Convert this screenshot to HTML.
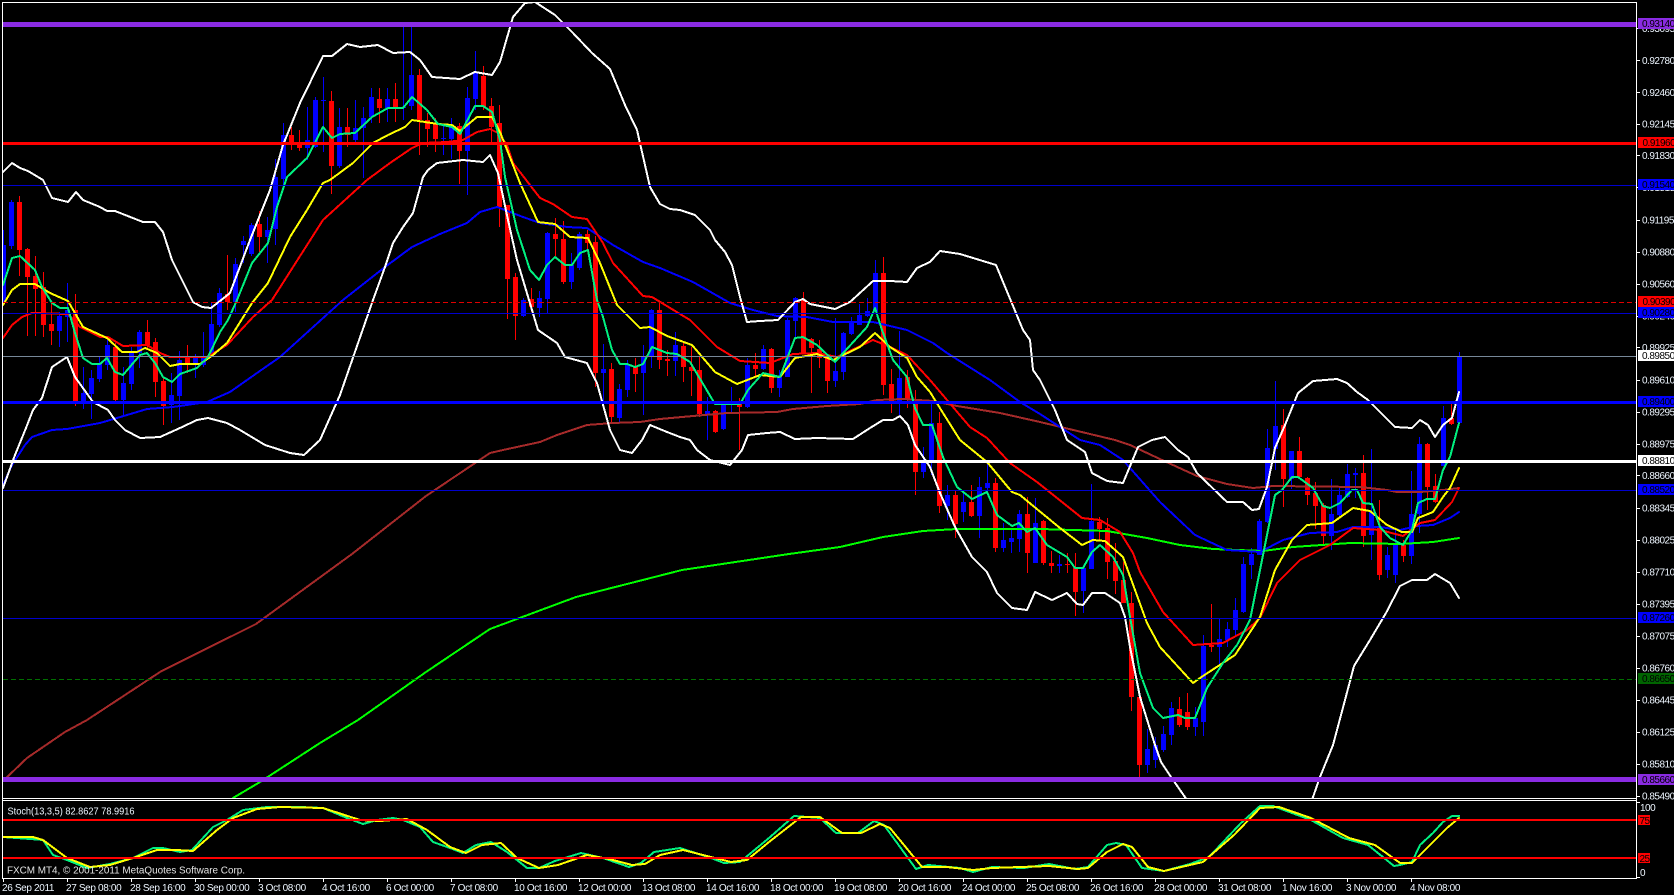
<!DOCTYPE html>
<html><head><meta charset="utf-8"><title>FXCM MT4 chart</title>
<style>
html,body{margin:0;padding:0;background:#000;width:1674px;height:895px;overflow:hidden}
svg{display:block}
text{font-family:"Liberation Sans",sans-serif;font-size:10px;fill:#eef6ff}
.p{letter-spacing:-.5px}
.d{letter-spacing:-.35px}
.k{fill:#000}
.m{fill:none;stroke-width:2;stroke-linejoin:round;stroke-linecap:round;shape-rendering:crispEdges}
.c path{shape-rendering:crispEdges;fill:none}
.h{shape-rendering:crispEdges}
</style></head><body>
<svg width="1674" height="895" viewBox="0 0 1674 895" xmlns="http://www.w3.org/2000/svg">
<defs><clipPath id="mc"><rect x="3" y="3" width="1633" height="795"/></clipPath></defs>
<rect width="1674" height="895" fill="#000"/>
<g clip-path="url(#mc)">
<g class="c">
<path stroke="#0000ff" stroke-width="1" d="M3.5 230V303M11.5 200V249M59.5 312V347M67.5 283V342M83.5 367V409M91.5 370V419M99.5 356V382M107.5 340V370M123.5 367V417M131.5 347V390M139.5 330V368M171.5 373V423M179.5 351V420M195.5 354V378M203.5 332V367M211.5 302V357M219.5 288V327M235.5 258V312M243.5 236V263M251.5 223V256M267.5 217V263M275.5 159V245M283.5 123V187M307.5 107V160M315.5 97V148M323.5 77V152M339.5 108V168M355.5 100V145M363.5 107V178M371.5 88V123M387.5 88V122M403.5 27V120M411.5 27V110M443.5 125V155M451.5 118V159M467.5 87V195M475.5 51V110M523.5 298V317M539.5 291V317M547.5 232V313M571.5 253V289M579.5 232V270M603.5 344V402M619.5 384V422M627.5 360V397M643.5 345V415M651.5 309V368M675.5 332V376M707.5 397V440M723.5 404V430M731.5 387V413M747.5 358V408M763.5 345V370M779.5 370V397M787.5 318V377M795.5 297V337M835.5 318V387M843.5 332V380M851.5 317V335M859.5 304V325M867.5 298V317M875.5 260V312M899.5 331V415M923.5 447V478M931.5 403V475M947.5 485V520M963.5 492V522M979.5 477V538M987.5 463V493M1003.5 523V552M1011.5 530V553M1019.5 510V552M1035.5 498V563M1059.5 555V573M1083.5 567V613M1091.5 484V569M1147.5 729V773M1155.5 737V768M1163.5 726V752M1171.5 702V745M1195.5 707V736M1203.5 635V736M1219.5 619V664M1227.5 622V647M1235.5 598V637M1243.5 557V613M1251.5 548V579M1259.5 519V555M1267.5 429V523M1275.5 381V470M1291.5 451V489M1331.5 479V550M1339.5 487V517M1347.5 464V498M1355.5 468V498M1371.5 449V560M1387.5 547V578M1395.5 530V583M1411.5 471V564M1419.5 437V533M1443.5 406V466M1459.5 352V423"/>
<path stroke="#ff0000" stroke-width="1" d="M19.5 196V276M27.5 248V336M35.5 256V336M43.5 272V337M51.5 303V345M75.5 294V406M115.5 343V402M147.5 320V350M155.5 338V397M163.5 377V425M187.5 345V373M227.5 255V310M259.5 211V252M291.5 127V150M299.5 130V151M331.5 91V194M347.5 108V147M379.5 88V123M395.5 83V122M419.5 69V155M427.5 113V147M435.5 118V152M459.5 123V184M483.5 66V110M491.5 98V143M499.5 105V227M507.5 205V319M515.5 273V340M531.5 288V312M555.5 218V256M563.5 221V284M587.5 230V252M595.5 236V387M611.5 363V423M635.5 358V392M659.5 303V369M667.5 350V376M683.5 343V382M691.5 347V396M699.5 357V417M715.5 410V433M739.5 398V450M755.5 353V377M771.5 348V393M803.5 292V354M811.5 338V393M819.5 340V368M827.5 357V393M883.5 257V395M891.5 369V413M907.5 370V408M915.5 390V495M939.5 412V513M955.5 490V538M971.5 485V517M995.5 478V552M1027.5 497V573M1043.5 520V565M1051.5 551V573M1067.5 553V573M1075.5 553V616M1099.5 517V540M1107.5 518V579M1115.5 543V594M1123.5 562V603M1131.5 592V711M1139.5 697V777M1179.5 697V727M1187.5 693V730M1211.5 604V652M1283.5 409V507M1299.5 437V479M1307.5 477V505M1315.5 482V529M1323.5 503V545M1363.5 455V547M1379.5 500V580M1403.5 540V562M1427.5 443V510M1435.5 474V503M1451.5 403V425"/>
<path stroke="#0000ff" stroke-width="5" d="M3.5 245V303M11.5 202V246M59.5 316V331M67.5 310V317M83.5 393V401M91.5 378V394M99.5 363V379M107.5 345V365M123.5 383V400M131.5 353V384M139.5 332V353M171.5 395V405M179.5 360V396M195.5 358V364M203.5 357V365M211.5 324V356M219.5 293V325M235.5 264V302M243.5 241V245M251.5 225V254M267.5 230V237M275.5 177V229M283.5 135V179M307.5 140V148M315.5 100V147M323.5 100V101M339.5 127V166M355.5 128V140M363.5 118V128M371.5 97V117M387.5 99V108M403.5 107V108M411.5 75V106M443.5 138V139M451.5 127V139M467.5 98V151M475.5 73V99M523.5 300V316M539.5 298V308M547.5 233V299M571.5 265V282M579.5 234V268M603.5 369V373M619.5 389V418M627.5 365V390M643.5 357V373M651.5 310V357M675.5 345V361M707.5 411V414M723.5 404V429M731.5 403V404M747.5 365V407M763.5 349V369M779.5 377V388M787.5 320V377M795.5 298V321M835.5 371V381M843.5 333V372M851.5 323V334M859.5 315V325M867.5 311V316M875.5 273V312M899.5 378V401M923.5 463V472M931.5 423V463M947.5 495V506M963.5 502V512M979.5 487V516M987.5 483V488M1003.5 540V548M1011.5 538V542M1019.5 514V539M1035.5 523V563M1059.5 564V566M1083.5 568V591M1091.5 521V569M1147.5 749V765M1155.5 745V760M1163.5 734V750M1171.5 708V735M1195.5 718V727M1203.5 646V722M1219.5 639V647M1227.5 629V640M1235.5 610V630M1243.5 564V612M1251.5 554V565M1259.5 521V555M1267.5 448V522M1275.5 426V449M1291.5 451V479M1331.5 514V536M1339.5 495V515M1347.5 474V497M1355.5 473V475M1371.5 512V535M1387.5 555V570M1395.5 545V575M1411.5 514V556M1419.5 444V514M1443.5 418V466M1459.5 356V423"/>
<path stroke="#ff0000" stroke-width="5" d="M19.5 202V250M27.5 249V277M35.5 276V289M43.5 287V325M51.5 324V331M75.5 310V401M115.5 347V400M147.5 332V345M155.5 342V382M163.5 381V406M187.5 357V364M227.5 294V302M259.5 224V237M291.5 135V144M299.5 143V148M331.5 101V166M347.5 127V135M379.5 99V108M395.5 99V108M419.5 75V120M427.5 120V129M435.5 124V139M459.5 126V151M483.5 76V107M491.5 106V127M499.5 123V207M507.5 205V279M515.5 277V316M531.5 299V307M555.5 234V239M563.5 239V282M587.5 234V243M595.5 242V373M611.5 369V417M635.5 367V374M659.5 310V360M667.5 359V361M683.5 346V367M691.5 367V371M699.5 370V414M715.5 411V432M739.5 404V407M755.5 365V369M771.5 349V388M803.5 300V353M811.5 339V348M819.5 349V358M827.5 358V381M883.5 273V385M891.5 384V401M907.5 377V400M915.5 403V472M939.5 423V506M955.5 495V524M971.5 502V516M995.5 483V548M1027.5 514V553M1043.5 521V563M1051.5 563V566M1067.5 564V565M1075.5 568V592M1099.5 522V529M1107.5 528V562M1115.5 561V581M1123.5 580V603M1131.5 603V697M1139.5 697V765M1179.5 709V725M1187.5 712V727M1211.5 645V647M1283.5 425V479M1299.5 451V477M1307.5 478V495M1315.5 493V506M1323.5 505V536M1363.5 473V536M1379.5 528V575M1403.5 545V556M1427.5 444V487M1435.5 486V502M1451.5 418V424"/>
</g>
<!-- brown MA -->
<polyline class="m" stroke="#a52a2a" points="3,781 27,758 65,732 87,720 160,672 256,624 352,554 426,496 490,453 503,450 540,442 557,435 587,425 613,423 640,422 660,419 693,416 727,413 777,412 793,409 827,406 860,404 877,400 903,399 933,401 957,406 1000,413 1040,422 1115,440 1130,445 1162,460 1197,476 1227,484 1253,488 1273,486 1360,487 1387,490 1397,492 1420,492 1443,490 1459,488"/>
<!-- lime MA -->
<polyline class="m" stroke="#00ff00" points="233,798 260,782 320,743 358,720 426,672 490,629 576,597 682,570 789,554 840,547 883,537 923,531 957,529 1040,529 1107,531 1147,538 1180,545 1213,549 1263,551 1293,547 1350,543 1400,544 1433,542 1459,538"/>
<!-- blue MA -->
<polyline class="m" stroke="#0000ff" points="3,485 12,465 25,445 32,437 52,430 67,429 100,423 117,418 147,409 173,407 207,402 230,392 257,373 280,357 343,300 385,267 412,247 440,234 467,223 480,212 497,207 523,217 540,223 567,227 587,228 613,245 643,262 660,268 693,282 730,303 753,310 777,316 807,317 833,322 873,322 907,330 933,343 947,353 990,380 1020,402 1040,414 1080,440 1100,445 1123,460 1160,502 1195,535 1227,550 1260,552 1283,540 1310,533 1337,532 1353,527 1380,527 1400,530 1417,526 1433,525 1450,518 1459,512"/>
<!-- white upper band -->
<polyline class="m" stroke="#ffffff" points="3,172 12,163 20,168 28,171 43,180 52,198 68,202 76,192 83,200 100,207 107,211 115,211 143,222 155,222 163,232 172,260 193,302 202,307 211,308 220,301 230,293 250,240 270,190 283,145 300,103 323,56 332,56 347,44 360,47 378,45 393,53 410,52 420,60 432,77 460,79 475,72 492,75 500,62 513,17 525,3 535,2 555,15 572,32 592,53 610,69 625,105 637,130 650,187 660,204 670,209 680,210 695,215 710,230 715,240 725,252 732,265 740,297 747,322 760,321 778,320 795,302 803,299 810,304 835,309 850,302 873,281 890,281 907,282 917,268 930,262 940,251 960,254 996,265 1023,330 1030,340 1033,370 1040,380 1055,410 1067,440 1085,452 1092,473 1107,481 1123,483 1138,447 1152,440 1165,437 1178,450 1188,457 1197,473 1227,502 1243,502 1252,510 1259,509 1267,487 1275,448 1285,425 1298,393 1313,381 1337,379 1347,383 1357,392 1368,400 1395,427 1412,428 1420,420 1428,425 1435,437 1443,425 1452,418 1459,392"/>
<!-- white lower band -->
<polyline class="m" stroke="#ffffff" points="3,488 15,455 26,428 33,410 42,398 52,367 67,357 75,377 93,402 108,410 115,420 125,430 140,438 160,437 180,428 197,420 208,418 227,423 240,430 265,445 290,453 304,455 320,440 340,395 373,300 385,267 393,243 403,227 413,213 423,177 428,170 437,163 463,160 483,162 490,155 498,173 508,220 517,260 538,330 557,343 565,357 587,363 597,383 610,430 620,450 632,453 642,440 650,425 667,432 680,437 690,440 697,450 710,460 730,465 742,450 748,435 767,433 780,432 795,439 817,438 853,439 870,428 883,420 893,420 900,416 908,425 915,445 930,467 940,493 955,527 972,557 987,572 997,593 1012,608 1027,610 1035,592 1052,600 1067,593 1077,604 1083,605 1092,593 1105,593 1120,603 1125,617 1130,647 1140,697 1155,745 1161,762 1171,777 1187,800"/>
<polyline class="m" stroke="#ffffff" points="1312,800 1320,777 1333,745 1345,700 1354,666 1370,640 1386,613 1400,586 1412,580 1427,580 1435,574 1450,583 1459,598"/>
<!-- red MA -->
<polyline class="m" stroke="#ff0000" points="3,338 12,325 22,317 32,313 68,314 80,327 100,337 108,337 123,346 147,345 160,353 170,357 207,357 227,345 253,317 272,300 323,220 367,180 390,163 412,148 423,143 447,142 463,140 477,132 490,129 498,133 507,145 513,163 540,198 553,204 572,217 587,219 603,243 613,263 643,296 652,297 680,314 690,320 717,347 740,361 770,363 793,354 817,353 837,357 873,340 890,347 907,355 930,380 947,400 970,427 987,438 1010,463 1027,475 1037,482 1082,518 1100,520 1120,532 1133,553 1140,572 1163,612 1193,645 1223,643 1247,630 1260,618 1277,583 1300,560 1330,545 1353,528 1380,530 1403,536 1420,523 1435,520 1452,502 1459,488"/>
<!-- yellow MA -->
<polyline class="m" stroke="#ffff00" points="3,305 12,290 20,284 35,284 50,293 68,301 83,327 107,338 122,352 137,352 145,348 157,353 170,366 180,364 200,364 213,355 227,343 252,303 268,283 290,237 307,210 323,183 330,180 353,163 373,143 388,135 405,127 412,120 438,124 452,125 460,131 477,117 492,117 500,132 513,165 520,183 538,222 555,224 570,237 588,238 600,263 617,305 640,328 650,327 667,336 692,345 715,372 737,384 760,375 780,377 795,358 817,354 833,360 860,347 875,333 890,347 907,358 917,377 930,392 943,413 960,440 987,462 1012,492 1020,495 1032,505 1060,528 1082,545 1093,540 1105,541 1123,557 1147,623 1160,647 1193,683 1203,676 1235,655 1260,617 1275,570 1292,540 1307,525 1332,523 1353,508 1370,511 1387,525 1402,532 1412,532 1418,518 1433,512 1443,497 1450,488 1459,468"/>
<!-- spring green MA -->
<polyline class="m" stroke="#00f080" points="3,285 12,258 20,256 35,270 42,287 52,303 60,308 68,308 75,333 83,358 92,364 100,364 107,358 115,372 123,375 140,355 147,353 155,363 163,377 172,382 180,374 197,368 208,357 220,332 228,320 237,300 252,263 268,243 277,207 287,177 307,158 323,127 332,138 340,134 355,133 372,117 388,108 403,108 412,97 427,110 438,124 452,127 460,134 475,106 483,106 492,112 500,140 505,177 517,230 530,270 539,280 547,265 555,257 565,265 572,265 580,253 588,250 597,300 603,317 612,350 620,364 627,364 635,367 643,364 652,347 667,353 677,354 690,362 715,404 740,404 748,390 763,373 780,377 795,338 803,337 817,345 835,362 867,327 875,308 882,330 893,360 907,377 915,408 923,425 932,425 943,457 957,487 972,499 987,492 997,515 1012,526 1019,523 1027,532 1035,528 1047,545 1067,557 1075,568 1083,568 1092,552 1100,545 1113,557 1123,575 1130,617 1140,673 1153,708 1163,718 1178,715 1185,718 1195,718 1207,688 1223,663 1237,645 1250,620 1262,560 1275,495 1282,490 1292,477 1298,477 1313,488 1323,506 1330,508 1340,503 1352,490 1357,490 1363,503 1372,504 1380,527 1390,538 1403,545 1412,530 1418,503 1427,499 1435,499 1443,470 1450,457 1459,423"/>
</g>
<!-- horizontal lines -->
<g class="h">
<rect x="3" y="22" width="1633" height="5" fill="#8a2be2"/>
<rect x="3" y="142" width="1633" height="3" fill="#ff0000"/>
<rect x="3" y="185" width="1633" height="1" fill="#0000cd"/>
<line x1="3" x2="1636" y1="302.5" y2="302.5" stroke="#e00000" stroke-dasharray="5 3"/>
<rect x="3" y="313" width="1633" height="1" fill="#0000cd"/>
<rect x="3" y="356" width="1633" height="1" fill="#778899"/>
<rect x="3" y="401" width="1633" height="3" fill="#0000ff"/>
<rect x="3" y="460" width="1633" height="3" fill="#ffffff"/>
<rect x="3" y="490" width="1633" height="1" fill="#0000cd"/>
<rect x="3" y="618" width="1633" height="1" fill="#0000cd"/>
<line x1="3" x2="1636" y1="679.5" y2="679.5" stroke="#007000" stroke-dasharray="5 3"/>
<rect x="3" y="777" width="1633" height="5" fill="#8a2be2"/>
</g>
<!-- stochastic -->
<g>
<polyline class="m" stroke="#00f080" points="3,837 30,839 43,840 53,855 67,860 87,868 110,864 133,858 153,848 163,848 180,852 192,850 213,827 227,820 243,810 267,807 300,807 323,808 347,818 363,824 377,820 393,818 403,820 420,827 433,842 450,848 463,853 476,845 491,842 507,852 527,868 539,868 555,861 581,853 603,858 629,867 641,863 654,852 680,848 711,858 724,863 740,862 769,838 794,816 820,818 836,833 858,833 874,821 884,825 916,869 928,865 960,868 973,872 992,867 1024,868 1049,864 1075,869 1088,867 1107,845 1116,843 1126,845 1142,868 1164,871 1190,864 1209,857 1241,823 1260,806 1273,806 1311,820 1343,838 1368,845 1394,866 1400,865 1412,862 1420,845 1433,833 1443,822 1452,816 1459,816"/>
<polyline class="m" stroke="#ffff00" points="3,837 33,837 43,840 67,858 90,867 110,865 133,858 157,850 177,850 193,851 217,830 233,818 257,809 280,807 323,808 360,820 380,821 407,819 427,830 450,847 466,853 482,845 501,843 517,858 539,868 558,865 587,855 609,859 632,865 645,864 660,855 683,850 711,857 731,862 747,860 769,842 801,817 820,817 842,833 861,833 880,824 890,828 922,867 947,867 973,870 992,868 1049,866 1078,869 1088,868 1107,852 1123,844 1132,847 1148,867 1164,871 1203,862 1234,835 1260,808 1279,807 1311,818 1349,838 1375,845 1400,863 1412,863 1422,853 1447,828 1459,818"/>
</g>
<rect class="h" x="3" y="819" width="1633" height="2" fill="#ff0000"/>
<rect class="h" x="3" y="857" width="1633" height="2" fill="#ff0000"/>
<!-- frames -->
<g class="h" fill="#ffffff">
<rect x="2" y="2" width="1635" height="1"/>
<rect x="2" y="2" width="1" height="877"/>
<rect x="1636" y="2" width="1" height="877"/>
<rect x="2" y="798" width="1635" height="1"/>
<rect x="2" y="800" width="1635" height="1"/>
<rect x="2" y="878" width="1635" height="1"/>
</g>
<!-- ticks -->
<path class="h" stroke="#fff" fill="none" d="M1637 28.5h3M1637 60.5h3M1637 92.5h3M1637 124.5h3M1637 155.5h3M1637 187.5h3M1637 220.5h3M1637 252.5h3M1637 284.5h3M1637 316.5h3M1637 347.5h3M1637 380.5h3M1637 412.5h3M1637 444.5h3M1637 475.5h3M1637 508.5h3M1637 540.5h3M1637 572.5h3M1637 604.5h3M1637 636.5h3M1637 668.5h3M1637 700.5h3M1637 732.5h3M1637 764.5h3M1637 796.5h3M1637 802.5h3M1637 877.5h3M3.5 879v3M67.5 879v3M131.5 879v3M195.5 879v3M259.5 879v3M323.5 879v3M387.5 879v3M451.5 879v3M515.5 879v3M579.5 879v3M643.5 879v3M707.5 879v3M771.5 879v3M835.5 879v3M899.5 879v3M963.5 879v3M1027.5 879v3M1091.5 879v3M1155.5 879v3M1219.5 879v3M1283.5 879v3M1347.5 879v3M1411.5 879v3"/>
<!-- price labels -->
<g class="p">
<text x="1642" y="32">0.93095</text>
<text x="1642" y="64">0.92780</text>
<text x="1642" y="96">0.92460</text>
<text x="1642" y="127.5">0.92145</text>
<text x="1642" y="159">0.91830</text>
<text x="1642" y="191">0.91515</text>
<text x="1642" y="223.5">0.91195</text>
<text x="1642" y="255.5">0.90880</text>
<text x="1642" y="287.5">0.90560</text>
<text x="1642" y="319.5">0.90240</text>
<text x="1642" y="351">0.89925</text>
<text x="1642" y="383.5">0.89610</text>
<text x="1642" y="415.5">0.89295</text>
<text x="1642" y="447.5">0.88975</text>
<text x="1642" y="479">0.88660</text>
<text x="1642" y="511.5">0.88345</text>
<text x="1642" y="543.5">0.88025</text>
<text x="1642" y="575.5">0.87710</text>
<text x="1642" y="607.5">0.87395</text>
<text x="1642" y="639.5">0.87075</text>
<text x="1642" y="671.5">0.86760</text>
<text x="1642" y="703.5">0.86445</text>
<text x="1642" y="735.5">0.86125</text>
<text x="1642" y="767.5">0.85810</text>
<text x="1642" y="799.5">0.85490</text>
</g>
<!-- colored price boxes -->
<g class="h">
<rect x="1638" y="18" width="36" height="11" fill="#8a2be2"/>
<rect x="1638" y="137" width="36" height="11" fill="#ff0000"/>
<rect x="1638" y="179" width="36" height="11" fill="#0000ff"/>
<rect x="1638" y="296" width="36" height="11" fill="#ff0000"/>
<rect x="1638" y="307" width="36" height="11" fill="#0000ff"/>
<rect x="1638" y="350" width="36" height="11" fill="#ffffff"/>
<rect x="1638" y="396" width="36" height="11" fill="#0000ff"/>
<rect x="1638" y="455" width="36" height="11" fill="#ffffff"/>
<rect x="1638" y="484" width="36" height="11" fill="#0000ff"/>
<rect x="1638" y="612" width="36" height="11" fill="#0000ff"/>
<rect x="1638" y="673" width="36" height="11" fill="#006400"/>
<rect x="1638" y="774" width="36" height="11" fill="#8a2be2"/>
<rect x="1638" y="815" width="12" height="10" fill="#ff0000"/>
<rect x="1638" y="853" width="12" height="10" fill="#ff0000"/>
</g>
<g class="p k">
<text class="k" x="1642" y="27">0.93140</text>
<text class="k" x="1642.5" y="146">0.91960</text>
<text class="k" x="1642" y="188">0.91540</text>
<text class="k" x="1642.5" y="305">0.90390</text>
<text class="k" x="1642" y="316">0.90280</text>
<text class="k" x="1642" y="359">0.89850</text>
<text class="k" x="1642" y="405">0.89400</text>
<text class="k" x="1642" y="464">0.88810</text>
<text class="k" x="1642" y="493">0.88520</text>
<text class="k" x="1642" y="621">0.87260</text>
<text class="k" x="1642" y="682">0.86650</text>
<text class="k" x="1642" y="783">0.85660</text>
</g>
<text class="p" x="1640" y="811">100</text>
<text class="p k" x="1639.5" y="824">75</text>
<text class="p k" x="1639.5" y="862">25</text>
<text class="p" x="1640" y="876">0</text>
<!-- pane text -->
<text x="7.5" y="814.5" textLength="127" lengthAdjust="spacingAndGlyphs">Stoch(13,3,5) 82.8627 78.9916</text>
<text x="7" y="873.5" textLength="238" lengthAdjust="spacingAndGlyphs" style="fill:#e4e4e4">FXCM MT4, © 2001-2011 MetaQuotes Software Corp.</text>
<!-- date labels -->
<g class="d">
<text x="2" y="891">26 Sep 2011</text>
<text x="66" y="891">27 Sep 08:00</text>
<text x="130" y="891">28 Sep 16:00</text>
<text x="194" y="891">30 Sep 00:00</text>
<text x="258" y="891">3 Oct 08:00</text>
<text x="322" y="891">4 Oct 16:00</text>
<text x="386" y="891">6 Oct 00:00</text>
<text x="450" y="891">7 Oct 08:00</text>
<text x="514" y="891">10 Oct 16:00</text>
<text x="578" y="891">12 Oct 00:00</text>
<text x="642" y="891">13 Oct 08:00</text>
<text x="706" y="891">14 Oct 16:00</text>
<text x="770" y="891">18 Oct 00:00</text>
<text x="834" y="891">19 Oct 08:00</text>
<text x="898" y="891">20 Oct 16:00</text>
<text x="962" y="891">24 Oct 00:00</text>
<text x="1026" y="891">25 Oct 08:00</text>
<text x="1090" y="891">26 Oct 16:00</text>
<text x="1154" y="891">28 Oct 00:00</text>
<text x="1218" y="891">31 Oct 08:00</text>
<text x="1282" y="891">1 Nov 16:00</text>
<text x="1346" y="891">3 Nov 00:00</text>
<text x="1410" y="891">4 Nov 08:00</text>
</g>
</svg>
</body></html>
